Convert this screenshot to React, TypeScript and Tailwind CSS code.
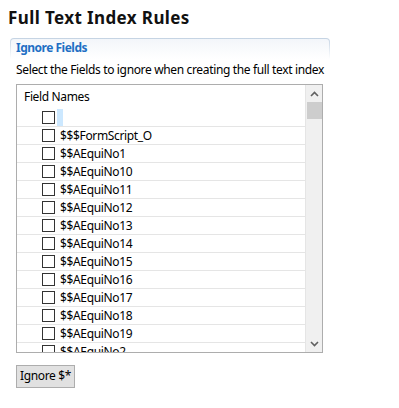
const fields = [
  "",
  "$$$FormScript_O",
  "$$AEquiNo1",
  "$$AEquiNo10",
  "$$AEquiNo11",
  "$$AEquiNo12",
  "$$AEquiNo13",
  "$$AEquiNo14",
  "$$AEquiNo15",
  "$$AEquiNo16",
  "$$AEquiNo17",
  "$$AEquiNo18",
  "$$AEquiNo19",
  "$$AEquiNo2",
];

function Chevron({ up }: { up?: boolean }) {
  return (
    <svg width="9" height="6" viewBox="0 0 9 6" className="block">
      <path
        d={up ? "M1 5 L4.5 1.5 L8 5" : "M1 1 L4.5 4.5 L8 1"}
        fill="none"
        stroke="#606060"
        strokeWidth="1.6"
      />
    </svg>
  );
}

export default function App() {
  return (
    <div
      className="w-[399px] h-[408px] bg-white text-black tracking-[-0.35px]"
      style={{ fontFamily: '"Noto Sans", "Open Sans", sans-serif' }}
    >
      <div className="pl-2 pt-[7px] h-[38px]">
        <h1 className="text-[17px] font-bold leading-[22px] tracking-[0.4px] text-[#111]">Full Text Index Rules</h1>
      </div>

      <div className="ml-[10px] w-[320px] rounded-t-[4px] bg-gradient-to-b from-[#c4d3e3] to-white px-[1px] pt-[1px]">
        <div className="h-[20px] rounded-t-[3px] bg-gradient-to-b from-[#f3f6fa] to-white pl-[5px] text-[12px] font-bold leading-[18px] tracking-[-0.5px] text-[#1f6fc4]">
          Ignore Fields
        </div>
      </div>

      <div className="pl-4 pt-[3px] text-[12px] leading-[16px]">
        Select the Fields to ignore when creating the full text index
      </div>

      <div className="ml-4 mt-[6px] flex h-[269px] w-[307px] border border-[#adadad] bg-white">
        <div className="relative w-[289px] overflow-hidden border-r border-[#e5e5e5]">
          <div className="h-[24px] pl-[7px] pt-[5px] text-[12px] leading-[14px]">Field Names</div>
          {fields.map((f, i) => (
            <div key={i} className="flex h-[18px] items-center border-b border-[#e5e5e5]">
              <div className="ml-[25px] h-[13px] w-[13px] border border-[#333] bg-white" />
              {i === 0 ? (
                <div className="ml-[2px] h-[17px] w-[6px] bg-[#cce8ff]" />
              ) : (
                <span className="ml-[5px] text-[12px] leading-[16px]">{f}</span>
              )}
            </div>
          ))}
        </div>
        <div className="flex w-[16px] flex-col bg-[#f0f0f0]">
          <div className="flex h-[17px] items-center justify-center">
            <Chevron up />
          </div>
          <div className="mx-auto h-[17px] w-[15px] bg-[#cdcdcd]" />
          <div className="flex-1" />
          <div className="flex h-[17px] items-center justify-center">
            <Chevron />
          </div>
        </div>
      </div>

      <div className="pl-4 pt-[9px]">
        <button className="h-[23px] w-[59px] border border-[#adadad] bg-[#e1e1e1] text-[12px] leading-[16px]">
          Ignore $*
        </button>
      </div>
    </div>
  );
}
